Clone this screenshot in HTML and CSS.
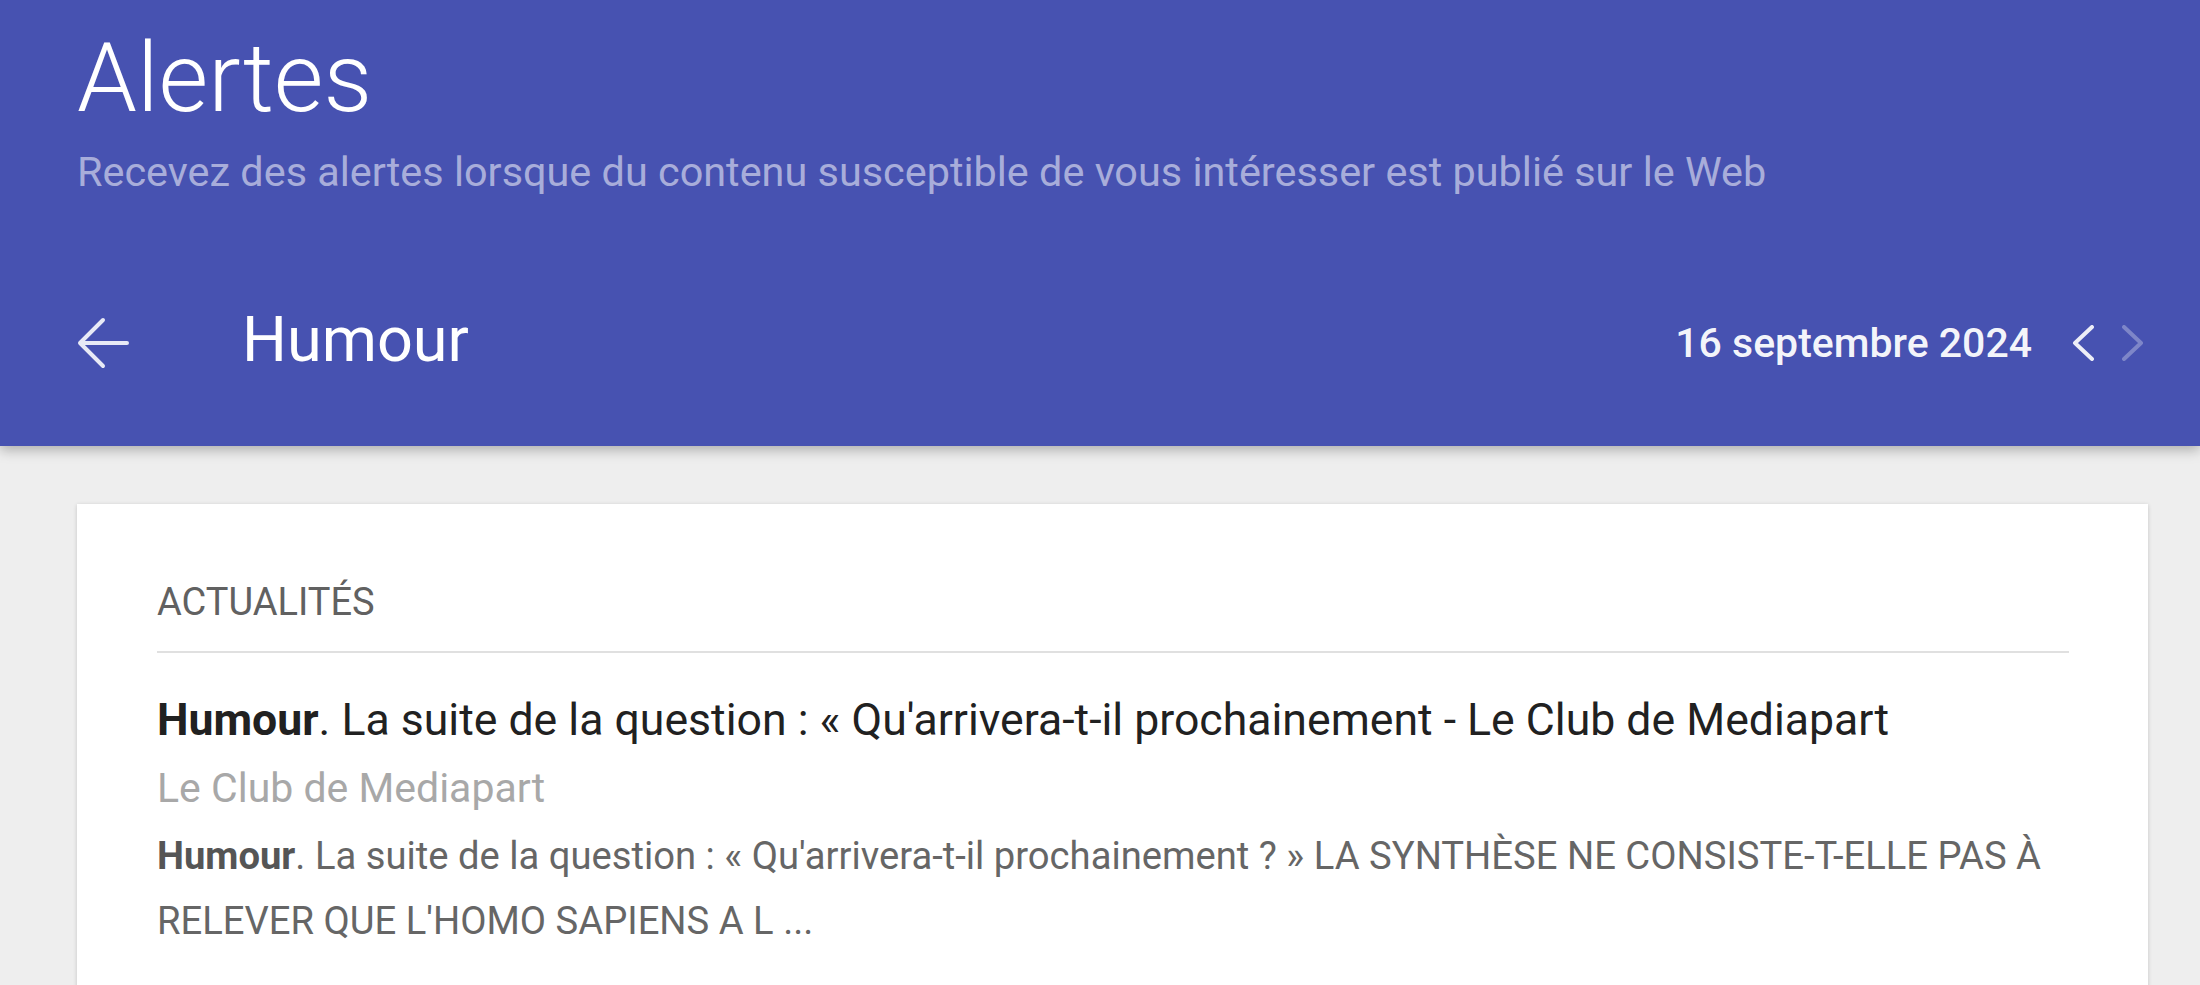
FILE: index.html
```html
<!DOCTYPE html>
<html lang="fr">
	<head>
		<meta charset="utf-8">
		<title>Alertes - Humour</title>
		<link rel="stylesheet" href="styles.css">
	</head>
	<body>
		<header class="alerts_head">
			<h1 class="alerts_head__title">Alertes</h1>
			<p class="alerts_head__desc">Recevez des alertes lorsque du contenu susceptible de vous intéresser est publié sur le Web</p>
			<div class="alerts_head__bar">
				<button type="button" class="alerts_head__back" aria-label="Retour">
					<svg width="52" height="52" viewBox="0 0 52 52"><path d="M3 26L26 3M3 26L26 49M3 26H50" fill="none" stroke="currentColor" stroke-width="4" stroke-linecap="round"/></svg>
				</button>
				<h2 class="alerts_head__query">Humour</h2>
				<span class="alerts_head__date">16 septembre 2024</span>
				<button type="button" class="alerts_head__nav" aria-label="Précédent">
					<svg width="22" height="36" viewBox="0 0 22 36"><path d="M20 2L3 18L20 34" fill="none" stroke="currentColor" stroke-width="4" stroke-linecap="round" stroke-linejoin="round"/></svg>
				</button>
				<button type="button" class="alerts_head__nav is-off" aria-label="Suivant">
					<svg width="22" height="36" viewBox="0 0 22 36"><path d="M2 2L19 18L2 34" fill="none" stroke="currentColor" stroke-width="4" stroke-linecap="round" stroke-linejoin="round"/></svg>
				</button>
			</div>
		</header>
		<main class="alerts_card">
			<h3 class="alerts_card__label">ACTUALITÉS</h3>
			<div class="alerts_item">
				<a class="alerts_item__title" href="#"><b>Humour</b>. La suite de la question : « Qu'arrivera-t-il prochainement - Le Club de Mediapart</a>
				<div class="alerts_item__source">Le Club de Mediapart</div>
				<p class="alerts_item__snippet"><b>Humour</b>. La suite de la question : « Qu'arrivera-t-il prochainement ? » LA SYNTHÈSE NE CONSISTE-T-ELLE PAS À RELEVER QUE L'HOMO SAPIENS A L ...</p>
			</div>
		</main>
	</body>
</html>
```

FILE: styles.css
```css
html, body, h1, h2, h3, p, button { margin:0; padding:0; }
body{ background:#eeeeee; font-family:Roboto, "Liberation Sans", sans-serif; color:#212121; overflow:hidden; }
button{ border:0; background:none; color:inherit; cursor:pointer; display:flex; }

.alerts_head{ position:relative; z-index:1; padding:29px 56px 51px 77px; background:#4752b1; color:#fff; box-shadow:0 4px 12px rgba(0,0,0,.28); }
.alerts_head__title{ font-size:96px; line-height:98px; font-weight:300; }
.alerts_head__desc{ margin-top:25px; font-size:41.4px; line-height:41px; color:rgba(255,255,255,.54); }
.alerts_head__bar{ display:flex; align-items:center; height:104px; margin-top:98px; }
.alerts_head__back{ color:rgba(255,255,255,.88); margin-right:113px; }
.alerts_head__query{ font-size:63px; line-height:63px; font-weight:400; margin-bottom:7px; }
.alerts_head__date{ margin-left:auto; margin-right:40px; font-size:41px; line-height:41px; font-weight:500; color:rgba(255,255,255,.95); }
.alerts_head__nav{ color:rgba(255,255,255,.9); }
.alerts_head__nav + .alerts_head__nav{ margin-left:28px; }
.alerts_head__nav.is-off{ color:rgba(255,255,255,.3); }

.alerts_card{ margin:58px 52px 0 77px; padding:75px 79px 80px 80px; background:#fff; box-shadow:0 1px 4px rgba(0,0,0,.18); }
.alerts_card__label{ padding-bottom:26px; border-bottom:2px solid #e0e0e0; font-size:38px; line-height:46px; font-weight:400; color:#616161; }
.alerts_item{ margin-top:35px; }
.alerts_item__title{ display:block; font-size:44.6px; line-height:65px; color:#212121; text-decoration:none; }
.alerts_item__title b{ font-weight:700; }
.alerts_item__source{ font-size:41px; line-height:71px; color:#a8a8a8; }
.alerts_item__snippet{ font-size:38.2px; line-height:65px; color:#666; }
.alerts_item__snippet b{ font-weight:700; color:#555; }
```
